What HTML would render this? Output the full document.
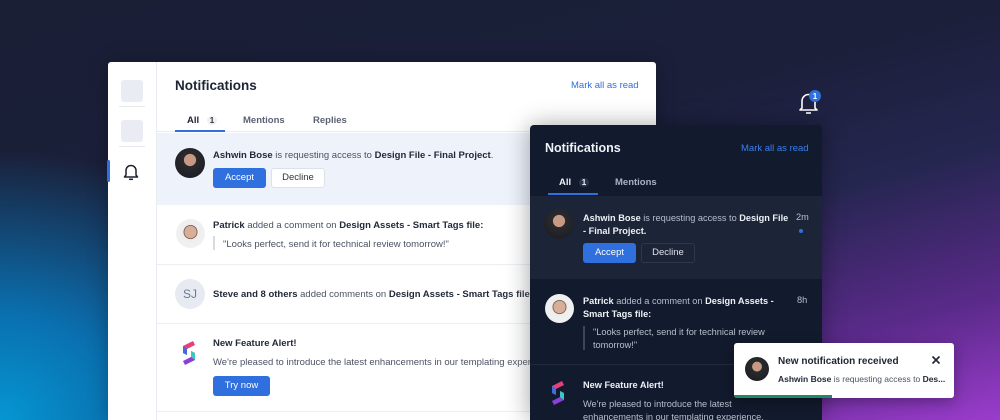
<!DOCTYPE html>
<html><head><meta charset="utf-8"><style>
*{box-sizing:border-box;margin:0;padding:0}
html,body{width:1000px;height:420px;overflow:hidden}
body{position:relative;font-family:"Liberation Sans",sans-serif;
background:linear-gradient(165deg,#1a1f36 0%,#1b1f3a 40%,#252650 60%,#5a2a8a 82%,#9b3ccc 100%);}
.bgl{position:absolute;left:0;top:0;width:1000px;height:420px;background:radial-gradient(ellipse 320px 270px at 0px 420px,#0596d2 0%,#0a6fae 40%,rgba(20,40,90,0) 100%)}
.abs{position:absolute}
.w{left:108px;top:62px;width:548px;height:358px;background:#fff;border-radius:3px 3px 0 0;box-shadow:0 0 20px rgba(0,0,0,.25)}
.side{left:108px;top:62px;width:49px;height:358px;border-right:1px solid #e8ebf0}
.sq{width:22px;height:22px;background:#e9edf3;border-radius:3px;left:121px}
.t{font-size:9.5px;color:#4a5263;white-space:nowrap}
b{color:#222a3a;font-weight:bold}
.av{border-radius:50%;background:radial-gradient(circle at 50% 40%,#c89a84 0 25%,#2a2a2e 27%,#181a20 100%)}
.av2{border-radius:50%;background:radial-gradient(circle at 50% 45%,#d9ae98 0 28%,#4a3a30 30%,#eee 34%,#f3f3f3 100%)}
.btn{height:20px;border-radius:3px;font-size:9.5px;text-align:center;line-height:20px}
.d{left:530px;top:125px;width:292px;height:295px;background:#121a2d;border-radius:4px 4px 0 0;box-shadow:0 0 24px rgba(0,0,0,.35)}
.dt{font-size:9.2px;color:#b7bfcd;white-space:nowrap}
.dt b{color:#eef1f6}
</style></head><body>
<div class="bgl"></div>
<div class="abs w"></div>
<div class="abs side"></div>
<div class="abs sq" style="top:80px"></div><div class="abs" style="left:119px;top:106px;width:26px;height:1px;background:#e6e9ee"></div>
<div class="abs sq" style="top:120px"></div><div class="abs" style="left:119px;top:146px;width:26px;height:1px;background:#e6e9ee"></div>
<div class="abs" style="left:107px;top:160px;width:3px;height:22px;background:#2f6fde;border-radius:2px"></div>
<svg class="abs" style="left:123px;top:163px" width="16" height="18" viewBox="0 0 16 18"><path d="M3 12V7.5a5 5 0 0 1 10 0V12l1.5 2h-13z" fill="none" stroke="#1c2230" stroke-width="1.5" stroke-linejoin="round"/><path d="M6 16.3h4" stroke="#1c2230" stroke-width="1.5"/></svg>
<div class="abs" style="left:175px;top:78px;font-size:13.5px;font-weight:bold;color:#1d2433">Notifications</div>
<div class="abs" style="left:571px;top:80px;font-size:9.5px;color:#2f6fde">Mark all as read</div>
<div class="abs" style="left:157px;top:131px;width:499px;height:1px;background:#e7eaef"></div>
<div class="abs" style="left:187px;top:115px;font-size:9.5px;font-weight:bold;color:#1d2433">All <span style="display:inline-block;margin-left:5px;font-size:8px;background:#eef0f4;border-radius:6px;padding:0 3px;color:#333">1</span></div>
<div class="abs" style="left:175px;top:130px;width:50px;height:2px;background:#2f6fde"></div>
<div class="abs" style="left:243px;top:115px;font-size:9.5px;font-weight:bold;color:#5a6272">Mentions</div>
<div class="abs" style="left:313px;top:115px;font-size:9.5px;font-weight:bold;color:#5a6272">Replies</div>
<div class="abs" style="left:157px;top:133px;width:499px;height:72px;background:#edf2fb"></div>
<div class="abs av" style="left:175px;top:148px;width:30px;height:30px"></div>
<div class="abs t" style="left:213px;top:150px"><b>Ashwin Bose</b> is requesting access to <b>Design File - Final Project</b>.</div>
<div class="abs btn" style="left:213px;top:168px;width:53px;background:#2f6fde;color:#fff">Accept</div>
<div class="abs btn" style="left:271px;top:168px;width:54px;background:#fff;border:1px solid #dde1e8;color:#333;line-height:18px">Decline</div>
<div class="abs av2" style="left:176px;top:219px;width:29px;height:29px"></div>
<div class="abs t" style="left:213px;top:220px"><b>Patrick</b> added a comment on <b>Design Assets - Smart Tags file:</b></div>
<div class="abs" style="left:213px;top:236px;width:2px;height:14px;background:#d7dbe2"></div>
<div class="abs t" style="left:223px;top:239px">"Looks perfect, send it for technical review tomorrow!"</div>
<div class="abs" style="left:157px;top:264px;width:499px;height:1px;background:#eceef2"></div>
<div class="abs" style="left:175px;top:279px;width:30px;height:30px;border-radius:50%;background:#e7ebf1;color:#6a7a96;font-size:12px;text-align:center;line-height:30px">SJ</div>
<div class="abs t" style="left:213px;top:289px"><b>Steve and 8 others</b> added comments on <b>Design Assets - Smart Tags file</b></div>
<div class="abs" style="left:157px;top:323px;width:499px;height:1px;background:#eceef2"></div>
<svg class="abs" style="left:179px;top:340px" width="20" height="26" viewBox="0 0 20 26"><path d="M14 1L4 6v7l4 2V9l8-4z" fill="#e4407a"/><path d="M4 6v7l4 2V9z" fill="#3b6fe0"/><path d="M6 25l10-5v-7l-4-2v6l-8 4z" fill="#8b3fd8"/><path d="M16 13v7l-4-3v-6z" fill="#3ec7c0"/></svg>
<div class="abs t" style="left:213px;top:338px"><b>New Feature Alert!</b></div>
<div class="abs t" style="left:213px;top:357px">We're pleased to introduce the latest enhancements in our templating experience.</div>
<div class="abs btn" style="left:213px;top:376px;width:57px;background:#2f6fde;color:#fff">Try now</div>
<div class="abs" style="left:157px;top:411px;width:499px;height:1px;background:#eceef2"></div>
<div class="abs" style="left:500px;top:125px;width:156px;height:295px;background:linear-gradient(90deg,rgba(255,255,255,0),rgba(235,238,244,.7))"></div>

<svg class="abs" style="left:798px;top:88px" width="30" height="30" viewBox="0 0 30 30"><path d="M4 20v-7a6.5 6.5 0 0 1 13 0v7l2 2H2z" fill="none" stroke="#fff" stroke-width="1.6" stroke-linejoin="round"/><path d="M8 25h5" stroke="#fff" stroke-width="1.6"/><circle cx="17" cy="8" r="6" fill="#2f6fde"/><text x="17" y="11" font-size="8" fill="#fff" text-anchor="middle" font-family="Liberation Sans" font-weight="bold">1</text></svg>

<div class="abs d"></div>
<div class="abs" style="left:545px;top:141px;font-size:12.5px;font-weight:bold;color:#eef1f6">Notifications</div>
<div class="abs" style="left:741px;top:143px;font-size:9.5px;color:#3a7ef0">Mark all as read</div>
<div class="abs" style="left:559px;top:177px;font-size:9.5px;font-weight:bold;color:#eef1f6">All <span style="display:inline-block;margin-left:5px;font-size:8px;background:#2a3348;border-radius:6px;padding:0 3px">1</span></div>
<div class="abs" style="left:615px;top:177px;font-size:9.5px;font-weight:bold;color:#aab2c2">Mentions</div>
<div class="abs" style="left:548px;top:193px;width:50px;height:2px;background:#2f6fde"></div>
<div class="abs" style="left:530px;top:196px;width:292px;height:83px;background:#1c2538"></div>
<div class="abs av" style="left:544px;top:209px;width:30px;height:30px"></div>
<div class="abs dt" style="left:583px;top:212px;line-height:12.5px"><b>Ashwin Bose</b> is requesting access to <b>Design File</b><br><b>- Final Project.</b></div>
<div class="abs dt" style="left:796px;top:212px">2m</div>
<div class="abs" style="left:799px;top:229px;width:4px;height:4px;border-radius:50%;background:#2f6fde"></div>
<div class="abs btn" style="left:583px;top:243px;width:53px;background:#2f6fde;color:#fff">Accept</div>
<div class="abs btn" style="left:641px;top:243px;width:54px;border:1px solid #2e374b;color:#dde2ea;line-height:18px">Decline</div>
<div class="abs av2" style="left:545px;top:294px;width:29px;height:29px"></div>
<div class="abs dt" style="left:583px;top:295px;line-height:12.5px"><b>Patrick</b> added a comment on <b>Design Assets -</b><br><b>Smart Tags file:</b></div>
<div class="abs dt" style="left:797px;top:295px">8h</div>
<div class="abs" style="left:583px;top:326px;width:2px;height:24px;background:#3d465a"></div>
<div class="abs dt" style="left:593px;top:326px;line-height:12.5px">"Looks perfect, send it for technical review<br>tomorrow!"</div>
<div class="abs" style="left:530px;top:364px;width:292px;height:1px;background:#222b3e"></div>
<svg class="abs" style="left:548px;top:380px" width="20" height="26" viewBox="0 0 20 26"><path d="M14 1L4 6v7l4 2V9l8-4z" fill="#e4407a"/><path d="M4 6v7l4 2V9z" fill="#3b6fe0"/><path d="M6 25l10-5v-7l-4-2v6l-8 4z" fill="#8b3fd8"/><path d="M16 13v7l-4-3v-6z" fill="#3ec7c0"/></svg>
<div class="abs dt" style="left:583px;top:380px"><b>New Feature Alert!</b></div>
<div class="abs dt" style="left:583px;top:398px;line-height:12.5px">We're pleased to introduce the latest<br>enhancements in our templating experience.</div>

<div class="abs" style="left:734px;top:343px;width:220px;height:55px;background:#fff;border-radius:3px;box-shadow:0 4px 14px rgba(0,0,0,.3);overflow:hidden">
<div class="abs av" style="left:11px;top:14px;width:24px;height:24px"></div>
<div class="abs" style="left:44px;top:13px;font-size:10px;font-weight:bold;color:#1d2433">New notification received</div>
<div class="abs" style="left:44px;top:31px;font-size:8.5px;color:#4a5263;white-space:nowrap"><b>Ashwin Bose</b> is requesting access to <b>Des...</b></div>
<svg class="abs" style="left:197px;top:12px" width="10" height="10" viewBox="0 0 10 10"><path d="M1.5 1.5l7 7M8.5 1.5l-7 7" stroke="#1d2433" stroke-width="1.6"/></svg>
<div class="abs" style="left:0;top:52px;width:98px;height:3px;background:#1f8a6a"></div>
</div>
</body></html>
